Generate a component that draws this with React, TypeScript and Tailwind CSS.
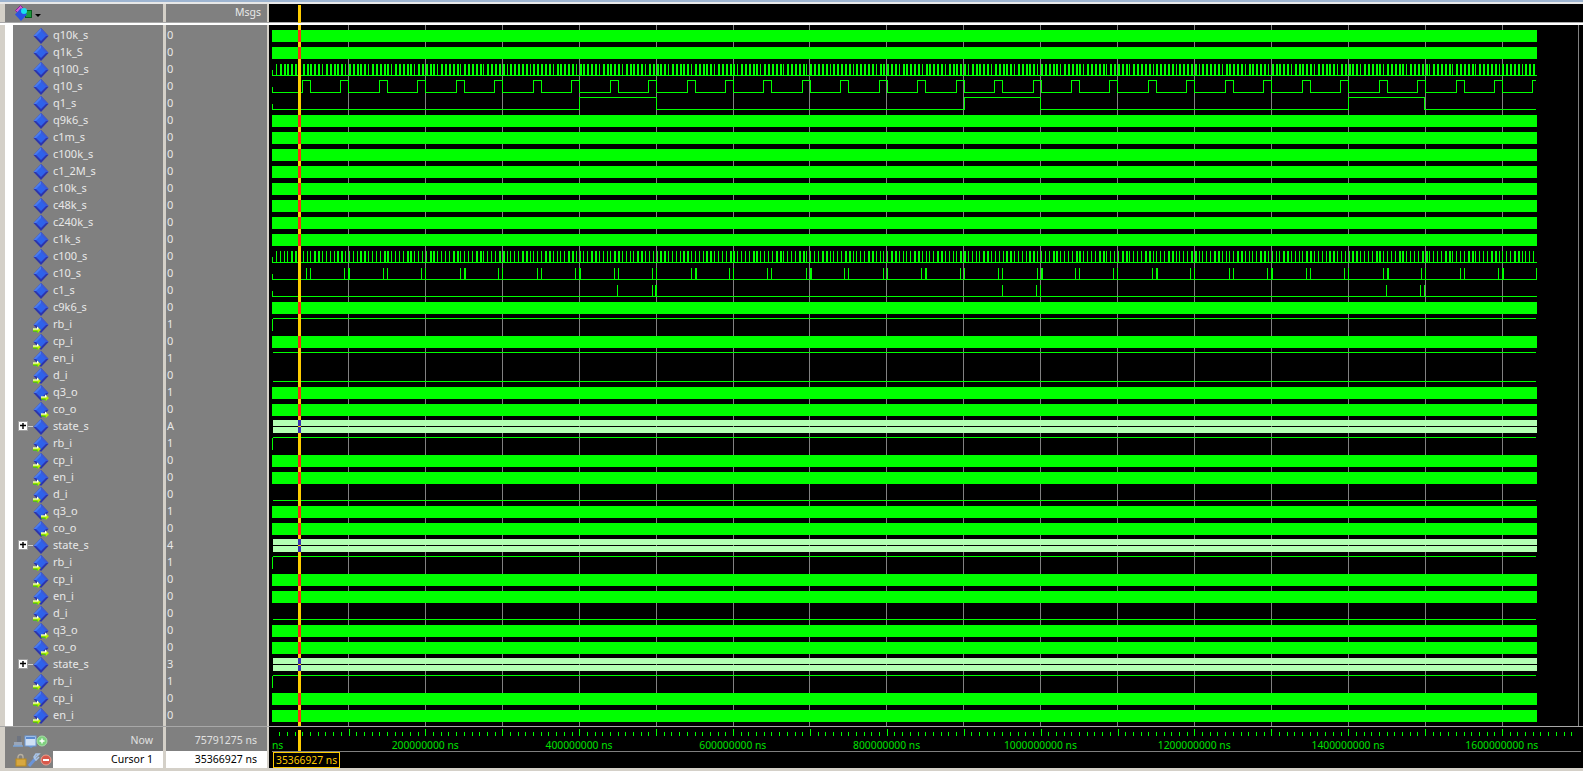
const FONT = "font-['Noto_Sans','Liberation_Sans',sans-serif]";

type Kind = "bar" | "state" | "high" | "flat" | "low" | "q100" | "q10" | "q1" | "c100" | "c10" | "c1";
type Dir = "none" | "in" | "out";
type Signal = { name: string; val: string; dir?: Dir; kind: Kind; plus?: boolean };

const block = (en: Kind, q3: string, co: string, state: string, enVal: string): Signal[] => [
  { name: "rb_i", val: "1", dir: "in", kind: "high" },
  { name: "cp_i", val: "0", dir: "in", kind: "bar" },
  { name: "en_i", val: enVal, dir: "in", kind: en },
  { name: "d_i", val: "0", dir: "in", kind: "low" },
  { name: "q3_o", val: q3, dir: "out", kind: "bar" },
  { name: "co_o", val: co, dir: "out", kind: "bar" },
  { name: "state_s", val: state, kind: "state", plus: true },
];

const signals: Signal[] = [
  { name: "q10k_s", val: "0", kind: "bar" },
  { name: "q1k_S", val: "0", kind: "bar" },
  { name: "q100_s", val: "0", kind: "q100" },
  { name: "q10_s", val: "0", kind: "q10" },
  { name: "q1_s", val: "0", kind: "q1" },
  { name: "q9k6_s", val: "0", kind: "bar" },
  { name: "c1m_s", val: "0", kind: "bar" },
  { name: "c100k_s", val: "0", kind: "bar" },
  { name: "c1_2M_s", val: "0", kind: "bar" },
  { name: "c10k_s", val: "0", kind: "bar" },
  { name: "c48k_s", val: "0", kind: "bar" },
  { name: "c240k_s", val: "0", kind: "bar" },
  { name: "c1k_s", val: "0", kind: "bar" },
  { name: "c100_s", val: "0", kind: "c100" },
  { name: "c10_s", val: "0", kind: "c10" },
  { name: "c1_s", val: "0", kind: "c1" },
  { name: "c9k6_s", val: "0", kind: "bar" },
  ...block("flat", "1", "0", "A", "1"),
  ...block("bar", "1", "0", "4", "0"),
  ...block("bar", "0", "0", "3", "0"),
  { name: "rb_i", val: "1", dir: "in", kind: "high" },
  { name: "cp_i", val: "0", dir: "in", kind: "bar" },
  { name: "en_i", val: "0", dir: "in", kind: "bar" },
];

const GREEN = "#00ff00";
const X0 = 272;
const X1 = 1537;
const CURSOR = 298;

function PortArrow({ x }: { x: number }) {
  return (
    <g transform={`translate(${x} 0)`}>
      <path d="M0 11.5 H4 V9.5 L8 13 L4 16.5 V14.5 H0 Z" fill="#b8f000" />
      <path d="M0 11.5 H4 V9.5 L5.5 10.8 V12.5 H0 Z" fill="#ffffff" />
      <path d="M0 13.8 H4.5 V15.5 L4 16 V14.6 H0 Z" fill="#12b012" />
    </g>
  );
}

function SignalIcon({ dir }: { dir: Dir }) {
  return (
    <svg width="16" height="16" viewBox="0 0 16 16" className="shrink-0">
      <path d="M8 0 L15.5 8 L8 16 L0.5 8 Z" fill="#2c34ac" />
      <path d="M8 0 L0.5 8 L8 8 Z" fill="#4a7cf0" />
      <path d="M8 0 L15.5 8 L8 8 Z" fill="#3a5ad8" />
      <path d="M8 3 L13 8 L8 13 L3 8 Z" fill="#2f62ea" />
      {dir === "in" && <PortArrow x={0} />}
      {dir === "out" && <PortArrow x={8} />}
    </svg>
  );
}

function PlusBox() {
  return (
    <span className="absolute left-[5px] top-[3px] flex h-[10px] w-[10px] items-center justify-center border border-[#a0a0a0] bg-white">
      <svg width="6" height="6" viewBox="0 0 6 6">
        <path d="M0 2.5 H6 M3 0 V6" stroke="#000" strokeWidth="1.4" />
      </svg>
    </span>
  );
}

function Logo() {
  return (
    <svg width="17" height="16" viewBox="0 0 17 16" className="shrink-0">
      <path d="M5.5 0.5 L10.5 5.5 L5.5 10.5 L0.5 5.5 Z" fill="#d060d0" stroke="#8a1f9a" strokeWidth="1" />
      <rect x="10.5" y="5.5" width="6" height="7" fill="#1c9a3c" stroke="#0a5a20" />
      <path d="M6 3 L12 9.5 L6 16 L0 9.5 Z" fill="#2a52e0" />
      <circle cx="9" cy="6" r="3" fill="#18e0f0" />
    </svg>
  );
}

function waveform(kind: Kind, row: number) {
  const top = 30 + row * 17;
  const els: React.ReactNode[] = [];
  const line = (x: number, y: number, w: number, h: number, k: string) =>
    els.push(<rect key={k} x={x} y={y} width={w} height={h} fill={GREEN} />);

  if (kind === "bar") {
    line(X0, top, X1 - X0, 12, "b");
  } else if (kind === "state") {
    els.push(<rect key="s1" x={X0 + 1} y={top - 1} width={X1 - X0 - 1} height={6} fill="#b3ffb3" />);
    els.push(<rect key="s2" x={X0 + 1} y={top + 6} width={X1 - X0 - 1} height={6} fill="#b3ffb3" />);
  } else if (kind === "high") {
    line(X0, top, 1, 12, "v");
    line(X0 + 1, top - 1, X1 - X0 - 2, 1, "h");
  } else if (kind === "flat") {
    line(X0 + 1, top - 1, X1 - X0 - 2, 1, "h");
  } else if (kind === "low") {
    line(X0 + 1, top + 11, X1 - X0 - 2, 1, "l");
  } else if (kind === "q100") {
    line(X0, top + 6, 1, 6, "v");
    line(X0, top + 11, X1 - X0, 1, "l");
    for (let k = 1; k * 3.845 + X0 < X1; k++) {
      const thin = k % 6 === 1;
      line(Math.round(X0 + k * 3.845), top, thin ? 1 : 2, 12, `p${k}`);
    }
  } else if (kind === "c100") {
    line(X0, top + 6, 1, 6, "v");
    line(X0, top + 11, X1 - X0, 1, "l");
    for (let k = 1; k * 3.845 + X0 < X1; k++) {
      const thick = k % 6 === 5 || k % 6 === 0;
      line(Math.round(X0 + k * 3.845), top, thick ? 2 : 1, 12, `p${k}`);
    }
  } else if (kind === "q10") {
    const low = top + 11;
    const high = top - 1;
    line(X0, top + 6, 1, 6, "v");
    let x = X0;
    for (let k = 0; k < 33; k++) {
      const rise = Math.round(302 + k * 38.45);
      const fall = Math.round(310 + k * 38.45);
      if (rise > X1) break;
      line(x, low, rise - x, 1, `l${k}`);
      line(rise, high, 1, 13, `r${k}`);
      line(rise, high, Math.min(fall, X1 - 1) - rise, 1, `h${k}`);
      if (fall < X1 - 1) line(fall, high, 1, 13, `f${k}`);
      x = fall;
    }
  } else if (kind === "q1") {
    const low = top + 11;
    const high = top - 1;
    line(X0, top + 6, 1, 6, "v");
    let x = X0;
    [579, 964, 1348].forEach((rise, i) => {
      const fall = rise + (i === 0 ? 77 : 76);
      line(x, low, rise - x, 1, `l${i}`);
      line(rise, high, 1, 13, `r${i}`);
      line(rise, high, fall - rise, 1, `h${i}`);
      line(fall, high, 1, 13, `f${i}`);
      x = fall;
    });
    line(x, low, X1 - 1 - x, 1, "end");
  } else if (kind === "c10") {
    line(X0, top + 6, 1, 6, "v");
    line(X0, top + 11, X1 - X0, 1, "l");
    for (let k = 0; k < 33; k++) {
      const a = Math.round(306 + k * 38.45);
      const b = Math.round(310 + k * 38.45);
      if (a >= X1) break;
      line(a, top, 1, 12, `a${k}`);
      if (b < X1) line(b, top, k % 3 === 1 ? 2 : 1, 12, `b${k}`);
    }
  } else if (kind === "c1") {
    line(X0, top + 6, 1, 6, "v");
    line(X0, top + 11, X1 - X0, 1, "l");
    [617, 652, 655, 656, 1002, 1036, 1040, 1386, 1420, 1424].forEach((x) => line(x, top, 1, 12, `p${x}`));
  }
  return <g key={row}>{els}</g>;
}

function WaveCanvas() {
  const grid = Array.from({ length: 17 }, (_, k) => Math.round(348 + k * 76.9));
  return (
    <svg width="1314" height="701" viewBox="269 25 1314 701" shapeRendering="crispEdges" className="block">
      <rect x="269" y="25" width="1314" height="701" fill="#000" />
      {grid.map((x) => (
        <rect key={x} x={x} y="25" width="1" height="701" fill="#808080" />
      ))}
      {signals.map((s, i) => waveform(s.kind, i))}
      <rect x={CURSOR} y="25" width="3" height="701" fill="#ffcc00" />
      {signals.map((s, i) => {
        const top = 30 + i * 17;
        if (s.kind === "bar") return <rect key={i} x={CURSOR} y={top} width="3" height="12" fill="#ff3010" />;
        if (s.kind === "state")
          return (
            <g key={i}>
              <rect x={CURSOR} y={top - 1} width="3" height="6" fill="#3a2cb0" />
              <rect x={CURSOR} y={top + 6} width="3" height="6" fill="#3a2cb0" />
            </g>
          );
        return null;
      })}
    </svg>
  );
}

function Ruler() {
  const ticks = Array.from({ length: 170 }, (_, k) => k).filter((k) => k > 0);
  const labels = [200, 400, 600, 800, 1000, 1200, 1400, 1600];
  return (
    <svg width="1314" height="41" viewBox="269 727 1314 41" className="block">
      <g shapeRendering="crispEdges">
        <rect x="269" y="727" width="1314" height="41" fill="#000" />
        {ticks.map((k) => {
          const x = Math.round(271.6 + k * 7.69);
          if (x > 1582) return null;
          const major = k % 10 === 0;
          return <rect key={k} x={x} y={major ? 729 : 732} width="1" height={major ? 7 : 4} fill={GREEN} />;
        })}
        <rect x="272" y="751" width="1309" height="1" fill="#808080" />
        <rect x={CURSOR} y="730" width="3" height="21" fill="#ffcc00" />
        <rect x="273.5" y="752.5" width="66" height="15" fill="none" stroke="#ffcc00" />
      </g>
      <g style={{ fontFamily: "'Noto Sans','Liberation Sans',sans-serif", fontSize: 10.3 }}>
        <text x="272" y="749" fill="#00e000">ns</text>
        {labels.map((l, i) => (
          <text key={l} x={271.4 + (i + 1) * 153.8} y="749" textAnchor="middle" fill="#00e000">
            {`${l}000000 ns`}
          </text>
        ))}
        <text x="276" y="764" fill="#ffcc00">35366927 ns</text>
      </g>
    </svg>
  );
}

function NowIcons() {
  return (
    <svg width="36" height="14" viewBox="0 0 36 14" className="shrink-0">
      <path d="M1 8 H9 V12 H1 Z" fill="#9aa6b8" />
      <path d="M4 2 H8 V8 H4 Z" fill="#6e7480" />
      <path d="M0 12 H10" stroke="#7aa4d8" strokeWidth="1.5" />
      <rect x="12" y="2" width="11" height="10" fill="#cfe0f4" stroke="#6a98d8" />
      <rect x="13" y="3" width="9" height="2" fill="#5a8ad0" />
      <path d="M15 12 L18 14 L21 12 Z" fill="#6a98d8" />
      <circle cx="29" cy="7" r="5" fill="#7ed07e" stroke="#a8dca8" />
      <path d="M26.5 7 H31.5 M29 4.5 V9.5" stroke="#fff" strokeWidth="1.4" />
    </svg>
  );
}

function CursorIcons() {
  return (
    <svg width="37" height="14" viewBox="0 0 37 14" className="shrink-0">
      <path d="M3 6 V4 A2.5 2.5 0 0 1 8 4 V6" fill="none" stroke="#b8b0a0" strokeWidth="1.3" />
      <rect x="1" y="6" width="10" height="7" fill="#d8a840" stroke="#b88a20" />
      <path d="M14 13 L20 6" stroke="#6a94d8" strokeWidth="3" />
      <path d="M19 6 L22 3 L24 1 L21 1 L19 4 L21 7 L24 4" fill="none" stroke="#a8c4e8" strokeWidth="1.5" />
      <circle cx="31" cy="7" r="5" fill="#d8584a" stroke="#e8a090" />
      <rect x="28" y="6" width="6" height="2" fill="#fff" />
    </svg>
  );
}

export default function App() {
  return (
    <div className={`flex h-screen w-screen flex-col overflow-hidden bg-[#d4d0c8] ${FONT} text-[11px]`}>
      <div className="h-[2px] bg-[#9db4d0]" />
      <div className="h-[2px] bg-[#e8e8e8]" />

      {/* header */}
      <div className="flex h-[18px] pl-[5px]">
        <div className="flex w-[158px] items-center gap-[3px] bg-[#808080] pl-[10px]">
          <Logo />
          <span className="mt-[5px] h-0 w-0 border-x-[3px] border-t-[3px] border-x-transparent border-t-black" />
        </div>
        <div className="ml-[3px] flex w-[101px] items-center justify-end bg-[#808080] pr-[6px] text-[10.5px] text-[#e8e8e8]">Msgs</div>
        <div className="relative ml-[2px] flex-1 bg-black">
          <div className="absolute left-[29px] top-[1px] h-[18px] w-[3px] bg-[#ffcc00]" />
        </div>
      </div>
      <div className="h-[1px] bg-[#a8a8a8]" />
      <div className="h-[2px] bg-white" />

      {/* signal list */}
      <div className="flex h-[701px] pl-[5px]">
        <div className="flex w-[158px] flex-col bg-[#808080] pt-[2px] pl-[8px] shadow-[inset_8px_0_0_#ffffff]">
          {signals.map((s, i) => (
            <div key={i} className="relative flex h-[17px] items-center gap-[4px] pl-[20px] text-[#e8e8e8]">
              {s.plus && <PlusBox />}
              {s.plus && <span className="absolute left-[15px] top-[8px] h-[1px] w-[5px] bg-[#d0d0d0]" />}
              <SignalIcon dir={s.dir ?? "none"} />
              <span>{s.name}</span>
            </div>
          ))}
        </div>
        <div className="ml-[3px] flex w-[101px] flex-col bg-[#808080] pt-[2px] pl-[1px]">
          {signals.map((s, i) => (
            <div key={i} className="flex h-[17px] items-center text-[#e8e8e8]">{s.val}</div>
          ))}
        </div>
        <div className="ml-[2px] flex-1">
          <WaveCanvas />
        </div>
      </div>

      <div className="h-[1px] bg-[#a8a8a8]" />

      {/* now and cursor */}
      <div className="flex h-[41px] pl-[5px] text-[10.5px]">
        <div className="flex w-[158px] flex-col bg-[#808080] pt-[3px]">
          <div className="flex h-[21px] items-center pl-[8px] pr-[10px] text-[#e0e0e0]">
            <NowIcons />
            <span className="ml-auto">Now</span>
          </div>
          <div className="flex h-[17px] items-center">
            <div className="flex w-[48px] justify-end pr-[1px]"><CursorIcons /></div>
            <div className="flex h-full flex-1 items-center justify-end bg-white pr-[10px] text-black">Cursor 1</div>
          </div>
        </div>
        <div className="ml-[3px] flex w-[101px] flex-col bg-[#808080] pt-[3px]">
          <div className="flex h-[21px] items-center justify-end pr-[10px] text-[#e0e0e0]">75791275 ns</div>
          <div className="flex h-[17px] items-center justify-end bg-white pr-[10px] text-black">35366927 ns</div>
        </div>
        <div className="ml-[2px] flex-1">
          <Ruler />
        </div>
      </div>
    </div>
  );
}
